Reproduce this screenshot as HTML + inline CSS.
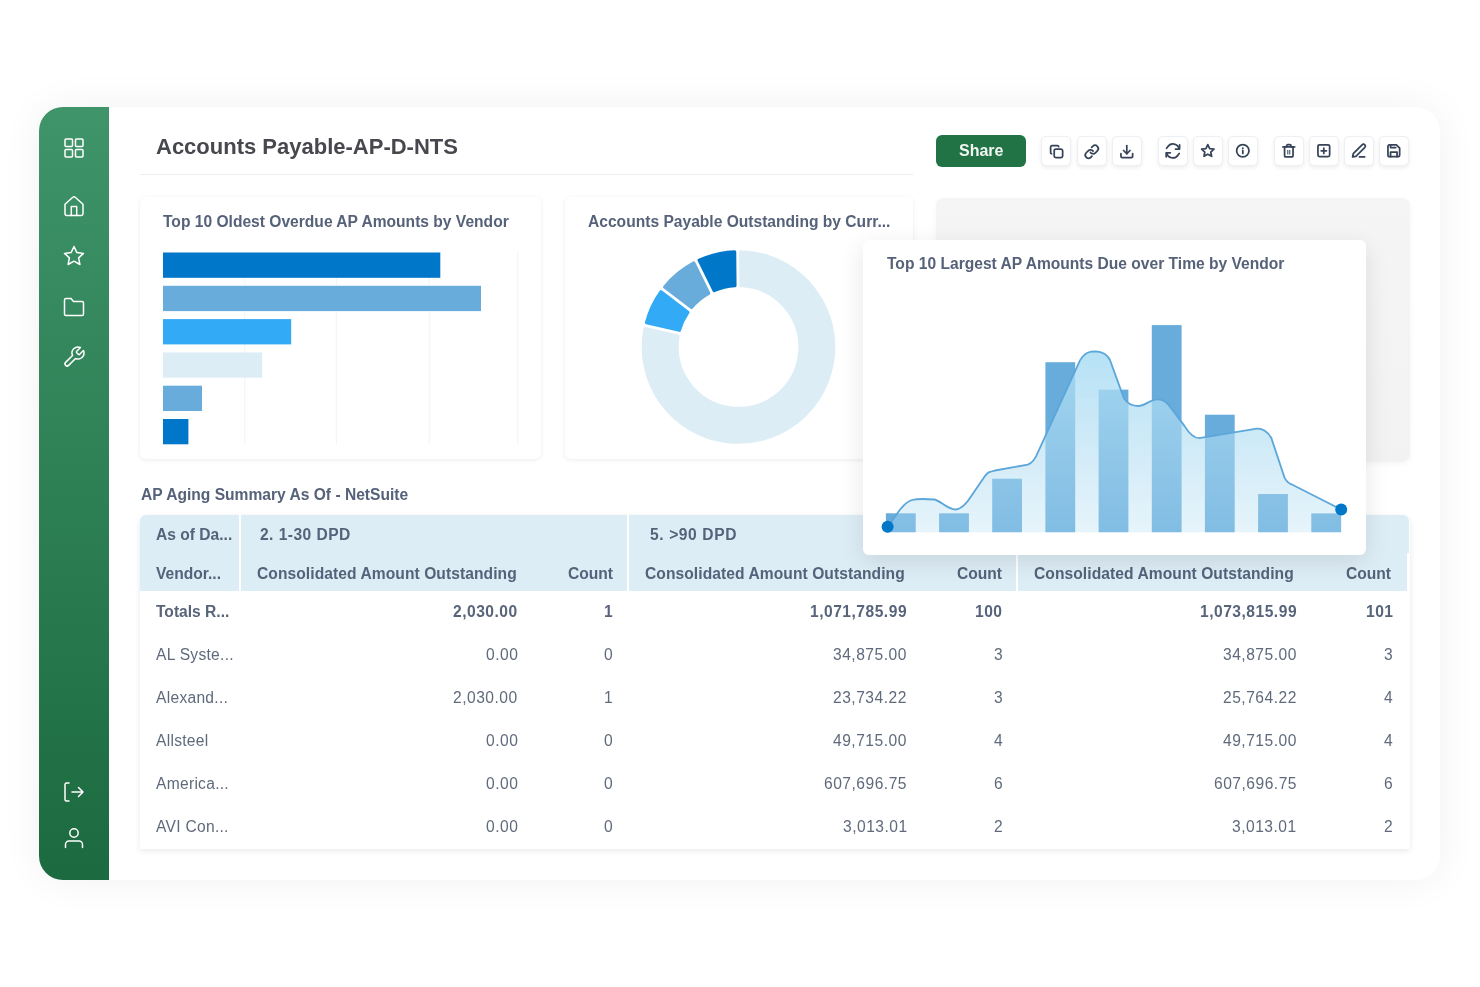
<!DOCTYPE html>
<html><head><meta charset="utf-8">
<style>
*{box-sizing:border-box;margin:0;padding:0}
html,body{width:1480px;height:987px;overflow:hidden;background:#fff;font-family:"Liberation Sans",sans-serif}
.abs{position:absolute}
svg{position:absolute;overflow:visible}
#card{position:absolute;left:39px;top:107px;width:1401px;height:773px;border-radius:24px;background:#fff;box-shadow:0 0 40px rgba(0,0,0,0.06);overflow:hidden}
#side{position:absolute;left:0;top:0;width:70px;height:773px;background:linear-gradient(#3f9469,#1c6a3f)}
.t{position:absolute;white-space:nowrap;line-height:1;will-change:transform}
.ch{position:absolute;background:#fff;border-radius:6px;box-shadow:0 1px 4px rgba(0,0,0,0.08)}
.ib{position:absolute;top:136px;width:30px;height:30px;border-radius:5px;background:#fff;border:1px solid #eceff3;box-shadow:0 2px 4px rgba(0,0,0,0.07)}
.ic{position:absolute;width:24px;height:24px;fill:none;stroke:#364359;stroke-width:1.9;stroke-linecap:round;stroke-linejoin:round}
.si{position:absolute;width:24px;height:24px;fill:none;stroke:#fff;stroke-width:1.5;stroke-linecap:round;stroke-linejoin:round}
</style></head><body>
<div id="card"><div id="side"></div></div>
<svg class="si" style="left:62.0px;top:135.5px" viewBox="0 0 24 24"><rect x="3" y="3" width="7.5" height="7.5" rx="1"/><rect x="13.5" y="3" width="7.5" height="7.5" rx="1"/><rect x="3" y="13.5" width="7.5" height="7.5" rx="1"/><rect x="13.5" y="13.5" width="7.5" height="7.5" rx="1"/></svg>
<svg class="si" style="left:62.0px;top:193.5px" viewBox="0 0 24 24"><path d="M3 10.2 L10.8 3.2 a1.8 1.8 0 0 1 2.4 0 L21 10.2 V19.8 a1.7 1.7 0 0 1 -1.7 1.7 H4.7 A1.7 1.7 0 0 1 3 19.8 Z"/><path d="M9.3 21.5 V12.5 H14.7 V21.5"/></svg>
<svg class="si" style="left:62.0px;top:244.0px" viewBox="0 0 24 24"><path d="M12 2.5 L14.9 8.6 L21.5 9.4 L16.6 13.9 L17.9 20.5 L12 17.2 L6.1 20.5 L7.4 13.9 L2.5 9.4 L9.1 8.6 Z"/></svg>
<svg class="si" style="left:62.4px;top:294.5px" viewBox="0 0 24 24"><path d="M2.5 5 a1.5 1.5 0 0 1 1.5 -1.5 H9 L11.5 6.5 H20 a1.5 1.5 0 0 1 1.5 1.5 V19 a1.5 1.5 0 0 1 -1.5 1.5 H4 A1.5 1.5 0 0 1 2.5 19 Z"/></svg>
<svg class="si" style="left:62.4px;top:344.5px" viewBox="0 0 24 24"><path d="M14.7 6.3 a1 1 0 0 0 0 1.4 l1.6 1.6 a1 1 0 0 0 1.4 0 l3.77 -3.77 a6 6 0 0 1 -7.94 7.94 l-6.91 6.91 a2.12 2.12 0 0 1 -3 -3 l6.91 -6.91 a6 6 0 0 1 7.94 -7.94 l-3.76 3.76 z"/></svg>
<svg class="si" style="left:62.2px;top:779.5px" viewBox="0 0 24 24"><path d="M7 3 H4.5 A1.5 1.5 0 0 0 3 4.5 V19.5 A1.5 1.5 0 0 0 4.5 21 H7"/><path d="M10 12 H21 M16.5 7.5 L21 12 L16.5 16.5"/></svg>
<svg class="si" style="left:62.0px;top:826.0px" viewBox="0 0 24 24"><circle cx="12" cy="7" r="4.2"/><path d="M3.5 21.5 V18.5 a3.5 3.5 0 0 1 3.5 -3.5 h10 a3.5 3.5 0 0 1 3.5 3.5 V21.5"/></svg>
<div class="t" style="left:156.0px;top:136.4px;font-size:22px;font-weight:bold;color:#47474e;">Accounts Payable-AP-D-NTS</div>
<div class="abs" style="left:140px;top:173.5px;width:773px;height:1.6px;background:#eceef1"></div>
<div class="abs" style="left:936px;top:134.5px;width:89.5px;height:32px;border-radius:6px;background:#217346"></div>
<div class="t" style="left:958.5px;top:143.0px;font-size:16px;font-weight:bold;color:#f2f6f3;">Share</div>
<div class="ib" style="left:1041.2px"></div>
<div class="ib" style="left:1076.7px"></div>
<div class="ib" style="left:1111.7px"></div>
<div class="ib" style="left:1158.2px"></div>
<div class="ib" style="left:1193.2px"></div>
<div class="ib" style="left:1228.2px"></div>
<div class="ib" style="left:1274.2px"></div>
<div class="ib" style="left:1309.2px"></div>
<div class="ib" style="left:1344.2px"></div>
<div class="ib" style="left:1379.2px"></div>
<svg class="ic" style="left:1048.5px;top:143.5px;width:15.6px;height:15.6px;stroke-width:2.69" viewBox="0 0 24 24"><rect x="8" y="8" width="13" height="13" rx="2.5"/><path d="M4 15 a2 2 0 0 1 -1.5 -2 V4.5 A2 2 0 0 1 4.5 2.5 H13 a2 2 0 0 1 2 1.5"/></svg>
<svg class="ic" style="left:1084.0px;top:143.5px;width:15.6px;height:15.6px;stroke-width:2.69" viewBox="0 0 24 24"><path d="M10 13 a5 5 0 0 0 7.54 .54 l3 -3 a5 5 0 0 0 -7.07 -7.07 l-1.72 1.71"/><path d="M14 11 a5 5 0 0 0 -7.54 -.54 l-3 3 a5 5 0 0 0 7.07 7.07 l1.71 -1.71"/></svg>
<svg class="ic" style="left:1119.0px;top:143.5px;width:15.6px;height:15.6px;stroke-width:2.69" viewBox="0 0 24 24"><path d="M3 15 v4 a2 2 0 0 0 2 2 h14 a2 2 0 0 0 2 -2 v-4"/><path d="M7 10 l5 5 l5 -5"/><path d="M12 15 V2.5"/></svg>
<svg class="ic" style="left:1163.8px;top:142.0px;width:17.8px;height:17.8px;stroke-width:2.36" viewBox="0 0 24 24"><path d="M20.5 9.5 A8.5 8.5 0 0 0 5 6.5 L3.5 8.5"/><path d="M3.5 14.5 A8.5 8.5 0 0 0 19 17.5 L20.5 15.5"/><path d="M21 4 V9.5 H15.5"/><path d="M3 20 V14.5 H8.5"/></svg>
<svg class="ic" style="left:1199.9px;top:143.1px;width:15.6px;height:15.6px;stroke-width:2.69" viewBox="0 0 24 24"><path d="M12 2.5 L14.9 8.6 L21.5 9.4 L16.6 13.9 L17.9 20.5 L12 17.2 L6.1 20.5 L7.4 13.9 L2.5 9.4 L9.1 8.6 Z"/></svg>
<svg class="ic" style="left:1234.9px;top:143.1px;width:15.6px;height:15.6px;stroke-width:2.69" viewBox="0 0 24 24"><circle cx="12" cy="12" r="9.5"/><path d="M12 16 V11.5"/><path d="M12 8 h.01" stroke-width="3"/></svg>
<svg class="ic" style="left:1280.9px;top:143.1px;width:15.6px;height:15.6px;stroke-width:2.69" viewBox="0 0 24 24"><path d="M3 6 H21"/><path d="M5.5 6 V19.5 a2 2 0 0 0 2 2 h9 a2 2 0 0 0 2 -2 V6"/><path d="M8.5 6 V4.5 a2 2 0 0 1 2 -2 h3 a2 2 0 0 1 2 2 V6"/><path d="M10.5 11 V17 M13.5 11 V17" stroke-width="1.6"/></svg>
<svg class="ic" style="left:1315.9px;top:143.1px;width:15.6px;height:15.6px;stroke-width:2.69" viewBox="0 0 24 24"><rect x="3" y="3" width="18" height="18" rx="2.5"/><path d="M12 8 V16 M8 12 H16"/></svg>
<svg class="ic" style="left:1350.9px;top:143.1px;width:15.6px;height:15.6px;stroke-width:2.69" viewBox="0 0 24 24"><path d="M17 3 a2.85 2.85 0 1 1 4 4 L7.5 20.5 L2.5 21.5 L3.5 16.5 Z"/><path d="M13 21.5 H21"/></svg>
<svg class="ic" style="left:1385.9px;top:143.1px;width:15.6px;height:15.6px;stroke-width:2.69" viewBox="0 0 24 24"><path d="M19 21 H5 a2 2 0 0 1 -2 -2 V5 a2 2 0 0 1 2 -2 h11 l5 5 v11 a2 2 0 0 1 -2 2 z"/><path d="M17 21 v-7 H7 v7"/><path d="M7 3 v4 h8"/></svg>
<div class="ch" style="left:140px;top:197px;width:401px;height:262px"></div>
<div class="t" style="left:163.0px;top:213.8px;font-size:15.6px;font-weight:bold;color:#56627a;">Top 10 Oldest Overdue AP Amounts by Vendor</div>
<svg style="left:0;top:0;width:1480px;height:987px"><rect x="244.3" y="252" width="1" height="192" fill="#f1f3f6"/><rect x="335.8" y="252" width="1" height="192" fill="#f1f3f6"/><rect x="428.7" y="252" width="1" height="192" fill="#f1f3f6"/><rect x="517.3" y="252" width="1" height="192" fill="#f1f3f6"/><rect x="163" y="252.5" width="277.3" height="25.3" fill="#0077c8"/><rect x="163" y="285.8" width="318.0" height="25.3" fill="#68acdc"/><rect x="163" y="319.1" width="128.2" height="25.3" fill="#33aaf5"/><rect x="163" y="352.4" width="99.2" height="25.3" fill="#ddedf5"/><rect x="163" y="385.7" width="39.0" height="25.3" fill="#68acdc"/><rect x="163" y="419.0" width="25.4" height="25.3" fill="#0077c8"/></svg>
<div class="ch" style="left:564.5px;top:197px;width:348.5px;height:262px"></div>
<div class="t" style="left:587.5px;top:213.8px;font-size:15.6px;font-weight:bold;color:#56627a;">Accounts Payable Outstanding by Curr...</div>
<svg style="left:0;top:0;width:1480px;height:987px"><path d="M734.67,251.88 A95.2,95.2 0 0 0 699.18,260.30 L714.12,290.65 A61.4,61.4 0 0 1 734.96,285.70 Z" fill="#0077c8" stroke="#0077c8" stroke-width="3.2" stroke-linejoin="round"/><path d="M693.80,262.95 A95.2,95.2 0 0 0 664.63,286.95 L691.53,307.45 A61.4,61.4 0 0 1 708.73,293.30 Z" fill="#68acdc" stroke="#68acdc" stroke-width="3.2" stroke-linejoin="round"/><path d="M660.99,291.72 A95.2,95.2 0 0 0 646.46,322.67 L679.42,330.28 A61.4,61.4 0 0 1 687.90,312.22 Z" fill="#33aaf5" stroke="#33aaf5" stroke-width="3.2" stroke-linejoin="round"/><path d="M645.11,328.52 A95.2,95.2 0 1 0 740.67,251.82 L740.96,285.65 A61.4,61.4 0 1 1 678.07,336.13 Z" fill="#ddedf5" stroke="#ddedf5" stroke-width="3.2" stroke-linejoin="round"/></svg>
<div class="abs" style="left:936px;top:198px;width:473.5px;height:264px;border-radius:8px;background:linear-gradient(#f5f5f5,#f2f2f2);box-shadow:0 2px 6px rgba(0,0,0,0.04)"></div>
<div class="t" style="left:140.5px;top:486.8px;font-size:15.6px;font-weight:bold;color:#56627a;">AP Aging Summary As Of - NetSuite</div>
<div class="abs" style="left:140px;top:514.5px;width:1269.5px;height:334.5px;background:#fff;box-shadow:0 2px 6px rgba(0,0,0,0.09);border-radius:8px 8px 0 0"></div>
<div class="abs" style="left:140px;top:514.5px;width:1269px;height:76.8px;background:#ddedf5;border-radius:6px 6px 0 0"></div>
<div class="abs" style="left:1407.3px;top:552.7px;width:2.5px;height:38.7px;background:#fff"></div>
<div class="abs" style="left:239px;top:515px;width:2px;height:76px;background:#fff"></div>
<div class="abs" style="left:627px;top:515px;width:2px;height:76px;background:#fff"></div>
<div class="abs" style="left:1016px;top:515px;width:2px;height:76px;background:#fff"></div>
<div class="t" style="left:156.0px;top:527.1px;font-size:15.6px;font-weight:bold;color:#56627a;">As of Da...</div>
<div class="t" style="left:260.0px;top:527.1px;font-size:15.6px;font-weight:bold;color:#56627a;letter-spacing:0.45px;">2. 1-30 DPD</div>
<div class="t" style="left:650.0px;top:527.1px;font-size:15.6px;font-weight:bold;color:#56627a;letter-spacing:0.6px;">5. &gt;90 DPD</div>
<div class="t" style="left:156.0px;top:565.8px;font-size:15.6px;font-weight:bold;color:#56627a;">Vendor...</div>
<div class="t" style="left:256.6px;top:565.8px;font-size:15.6px;font-weight:bold;color:#56627a;letter-spacing:0.07px;">Consolidated Amount Outstanding</div>
<div class="t" style="right:867.0px;top:565.8px;font-size:15.6px;font-weight:bold;color:#56627a;">Count</div>
<div class="t" style="left:645.4px;top:565.8px;font-size:15.6px;font-weight:bold;color:#56627a;letter-spacing:0.07px;">Consolidated Amount Outstanding</div>
<div class="t" style="right:478.0px;top:565.8px;font-size:15.6px;font-weight:bold;color:#56627a;">Count</div>
<div class="t" style="left:1034.2px;top:565.8px;font-size:15.6px;font-weight:bold;color:#56627a;letter-spacing:0.07px;">Consolidated Amount Outstanding</div>
<div class="t" style="right:89.2px;top:565.8px;font-size:15.6px;font-weight:bold;color:#56627a;">Count</div>
<div class="t" style="left:156.0px;top:604.1px;font-size:15.6px;font-weight:bold;color:#58647a;">Totals R...</div>
<div class="t" style="right:962.0px;top:604.1px;font-size:15.6px;font-weight:bold;color:#58647a;letter-spacing:0.5px;">2,030.00</div>
<div class="t" style="right:866.5px;top:604.1px;font-size:15.6px;font-weight:bold;color:#58647a;letter-spacing:0.5px;">1</div>
<div class="t" style="right:572.7px;top:604.1px;font-size:15.6px;font-weight:bold;color:#58647a;letter-spacing:0.5px;">1,071,785.99</div>
<div class="t" style="right:477.0px;top:604.1px;font-size:15.6px;font-weight:bold;color:#58647a;letter-spacing:0.5px;">100</div>
<div class="t" style="right:183.3px;top:604.1px;font-size:15.6px;font-weight:bold;color:#58647a;letter-spacing:0.5px;">1,073,815.99</div>
<div class="t" style="right:86.5px;top:604.1px;font-size:15.6px;font-weight:bold;color:#58647a;letter-spacing:0.5px;">101</div>
<div class="t" style="left:156.0px;top:647.1px;font-size:15.6px;font-weight:normal;color:#5f6a7c;letter-spacing:0.28px;">AL Syste...</div>
<div class="t" style="right:962.0px;top:647.1px;font-size:15.6px;font-weight:normal;color:#5f6a7c;letter-spacing:0.5px;">0.00</div>
<div class="t" style="right:866.5px;top:647.1px;font-size:15.6px;font-weight:normal;color:#5f6a7c;letter-spacing:0.5px;">0</div>
<div class="t" style="right:572.7px;top:647.1px;font-size:15.6px;font-weight:normal;color:#5f6a7c;letter-spacing:0.5px;">34,875.00</div>
<div class="t" style="right:477.0px;top:647.1px;font-size:15.6px;font-weight:normal;color:#5f6a7c;letter-spacing:0.5px;">3</div>
<div class="t" style="right:183.3px;top:647.1px;font-size:15.6px;font-weight:normal;color:#5f6a7c;letter-spacing:0.5px;">34,875.00</div>
<div class="t" style="right:86.5px;top:647.1px;font-size:15.6px;font-weight:normal;color:#5f6a7c;letter-spacing:0.5px;">3</div>
<div class="t" style="left:156.0px;top:690.1px;font-size:15.6px;font-weight:normal;color:#5f6a7c;letter-spacing:0.28px;">Alexand...</div>
<div class="t" style="right:962.0px;top:690.1px;font-size:15.6px;font-weight:normal;color:#5f6a7c;letter-spacing:0.5px;">2,030.00</div>
<div class="t" style="right:866.5px;top:690.1px;font-size:15.6px;font-weight:normal;color:#5f6a7c;letter-spacing:0.5px;">1</div>
<div class="t" style="right:572.7px;top:690.1px;font-size:15.6px;font-weight:normal;color:#5f6a7c;letter-spacing:0.5px;">23,734.22</div>
<div class="t" style="right:477.0px;top:690.1px;font-size:15.6px;font-weight:normal;color:#5f6a7c;letter-spacing:0.5px;">3</div>
<div class="t" style="right:183.3px;top:690.1px;font-size:15.6px;font-weight:normal;color:#5f6a7c;letter-spacing:0.5px;">25,764.22</div>
<div class="t" style="right:86.5px;top:690.1px;font-size:15.6px;font-weight:normal;color:#5f6a7c;letter-spacing:0.5px;">4</div>
<div class="t" style="left:156.0px;top:733.1px;font-size:15.6px;font-weight:normal;color:#5f6a7c;letter-spacing:0.28px;">Allsteel</div>
<div class="t" style="right:962.0px;top:733.1px;font-size:15.6px;font-weight:normal;color:#5f6a7c;letter-spacing:0.5px;">0.00</div>
<div class="t" style="right:866.5px;top:733.1px;font-size:15.6px;font-weight:normal;color:#5f6a7c;letter-spacing:0.5px;">0</div>
<div class="t" style="right:572.7px;top:733.1px;font-size:15.6px;font-weight:normal;color:#5f6a7c;letter-spacing:0.5px;">49,715.00</div>
<div class="t" style="right:477.0px;top:733.1px;font-size:15.6px;font-weight:normal;color:#5f6a7c;letter-spacing:0.5px;">4</div>
<div class="t" style="right:183.3px;top:733.1px;font-size:15.6px;font-weight:normal;color:#5f6a7c;letter-spacing:0.5px;">49,715.00</div>
<div class="t" style="right:86.5px;top:733.1px;font-size:15.6px;font-weight:normal;color:#5f6a7c;letter-spacing:0.5px;">4</div>
<div class="t" style="left:156.0px;top:776.1px;font-size:15.6px;font-weight:normal;color:#5f6a7c;letter-spacing:0.28px;">America...</div>
<div class="t" style="right:962.0px;top:776.1px;font-size:15.6px;font-weight:normal;color:#5f6a7c;letter-spacing:0.5px;">0.00</div>
<div class="t" style="right:866.5px;top:776.1px;font-size:15.6px;font-weight:normal;color:#5f6a7c;letter-spacing:0.5px;">0</div>
<div class="t" style="right:572.7px;top:776.1px;font-size:15.6px;font-weight:normal;color:#5f6a7c;letter-spacing:0.5px;">607,696.75</div>
<div class="t" style="right:477.0px;top:776.1px;font-size:15.6px;font-weight:normal;color:#5f6a7c;letter-spacing:0.5px;">6</div>
<div class="t" style="right:183.3px;top:776.1px;font-size:15.6px;font-weight:normal;color:#5f6a7c;letter-spacing:0.5px;">607,696.75</div>
<div class="t" style="right:86.5px;top:776.1px;font-size:15.6px;font-weight:normal;color:#5f6a7c;letter-spacing:0.5px;">6</div>
<div class="t" style="left:156.0px;top:819.1px;font-size:15.6px;font-weight:normal;color:#5f6a7c;letter-spacing:0.28px;">AVI Con...</div>
<div class="t" style="right:962.0px;top:819.1px;font-size:15.6px;font-weight:normal;color:#5f6a7c;letter-spacing:0.5px;">0.00</div>
<div class="t" style="right:866.5px;top:819.1px;font-size:15.6px;font-weight:normal;color:#5f6a7c;letter-spacing:0.5px;">0</div>
<div class="t" style="right:572.7px;top:819.1px;font-size:15.6px;font-weight:normal;color:#5f6a7c;letter-spacing:0.5px;">3,013.01</div>
<div class="t" style="right:477.0px;top:819.1px;font-size:15.6px;font-weight:normal;color:#5f6a7c;letter-spacing:0.5px;">2</div>
<div class="t" style="right:183.3px;top:819.1px;font-size:15.6px;font-weight:normal;color:#5f6a7c;letter-spacing:0.5px;">3,013.01</div>
<div class="t" style="right:86.5px;top:819.1px;font-size:15.6px;font-weight:normal;color:#5f6a7c;letter-spacing:0.5px;">2</div>
<div class="ch" style="left:862.7px;top:240.4px;width:503.5px;height:315px;box-shadow:0 6px 24px rgba(0,0,0,0.10)"></div>
<div class="t" style="left:886.6px;top:256.1px;font-size:15.6px;font-weight:bold;color:#56627a;">Top 10 Largest AP Amounts Due over Time by Vendor</div>
<svg style="left:0;top:0;width:1480px;height:987px"><defs><linearGradient id="ag" x1="0" y1="0" x2="0" y2="1" gradientUnits="objectBoundingBox"><stop offset="0" stop-color="rgb(172,222,244)" stop-opacity="0.88"/><stop offset="0.5" stop-color="rgb(175,220,242)" stop-opacity="0.6"/><stop offset="1" stop-color="rgb(180,222,242)" stop-opacity="0.33"/></linearGradient></defs><rect x="885.9" y="513.3" width="29.8" height="18.9" fill="#68acdc"/><rect x="939.1" y="513.3" width="29.8" height="18.9" fill="#68acdc"/><rect x="992.2" y="478.7" width="29.8" height="53.5" fill="#68acdc"/><rect x="1045.4" y="362.2" width="29.8" height="170.0" fill="#68acdc"/><rect x="1098.6" y="389.6" width="29.8" height="142.6" fill="#68acdc"/><rect x="1151.8" y="325.1" width="29.8" height="207.1" fill="#68acdc"/><rect x="1204.9" y="414.7" width="29.8" height="117.5" fill="#68acdc"/><rect x="1258.1" y="494" width="29.8" height="38.2" fill="#68acdc"/><rect x="1311.3" y="513.4" width="29.8" height="18.8" fill="#68acdc"/><path d="M887.6,526.7 C895,518 902,503 912,500 C916,499 928,499 934,499.5 C940,500 947,509.5 955.4,509.5 C962,509.5 967,503 972,495 L985.3,475.6 C988,472 990,471.6 995,470.5 L1027.8,464.7 C1032,463 1035,460 1038,452 L1080,360.4 C1085,352 1090,351.3 1095.8,351.3 C1102,351.5 1107,354 1110,360 L1123.8,398.1 C1128,405 1134,406 1138.4,406 C1145,406 1150,399.3 1157.8,399.3 C1163,399.3 1167,402 1171,408 L1184.6,426.1 C1190,435 1195,438.2 1199.4,438.2 L1256.7,428.7 C1262,428 1268,432 1271.4,438.2 L1284.6,477.9 C1287,482 1289,484 1292,484.5 L1341.2,509.5 L1341.2,532.2 L887.6,532.2 Z" fill="url(#ag)"/><path d="M887.6,526.7 C895,518 902,503 912,500 C916,499 928,499 934,499.5 C940,500 947,509.5 955.4,509.5 C962,509.5 967,503 972,495 L985.3,475.6 C988,472 990,471.6 995,470.5 L1027.8,464.7 C1032,463 1035,460 1038,452 L1080,360.4 C1085,352 1090,351.3 1095.8,351.3 C1102,351.5 1107,354 1110,360 L1123.8,398.1 C1128,405 1134,406 1138.4,406 C1145,406 1150,399.3 1157.8,399.3 C1163,399.3 1167,402 1171,408 L1184.6,426.1 C1190,435 1195,438.2 1199.4,438.2 L1256.7,428.7 C1262,428 1268,432 1271.4,438.2 L1284.6,477.9 C1287,482 1289,484 1292,484.5 L1341.2,509.5" fill="none" stroke="#5ca6d9" stroke-width="1.8"/><circle cx="887.6" cy="526.7" r="6" fill="#0077c8"/><circle cx="1341.2" cy="509.5" r="6" fill="#0077c8"/></svg>
</body></html>
